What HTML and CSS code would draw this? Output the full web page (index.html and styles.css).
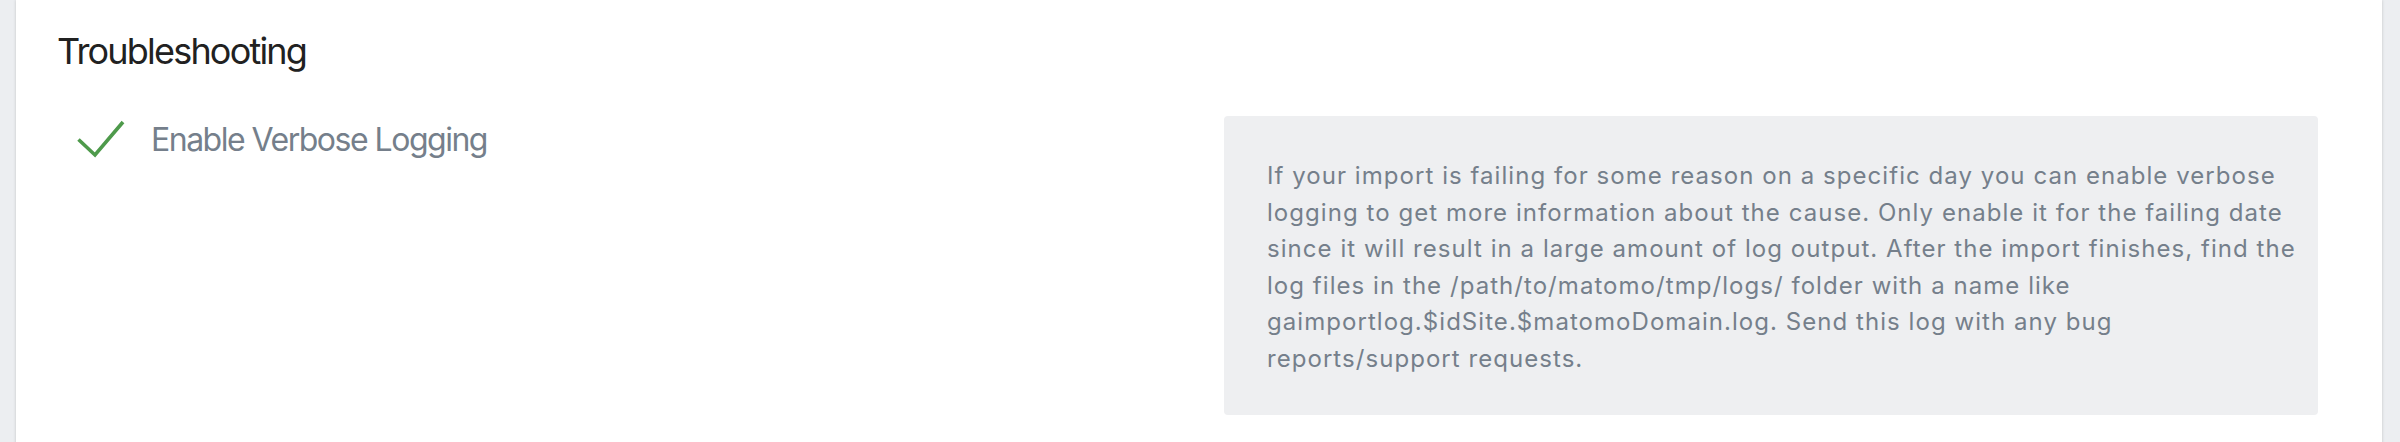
FILE: index.html
```html
<!DOCTYPE html>
<html lang="en">
<head>
<meta charset="utf-8">
<title>Troubleshooting</title>
<link rel="stylesheet" href="styles.css">
</head>
<body>
<div class="page">
  <section class="card">
    <h2 class="card-title">Troubleshooting</h2>
    <div class="row">
      <div class="col col-left">
        <label class="check">
          <svg class="check-icon" width="50" height="38" viewBox="0 0 50 38" aria-hidden="true">
            <path d="M2.5 19.5 L19 35 L47 2" fill="none" stroke="#4e9a4b" stroke-width="3.6" stroke-linecap="butt" stroke-linejoin="miter"/>
          </svg>
          <span class="check-label">Enable Verbose Logging</span>
        </label>
      </div>
      <div class="col col-right">
        <div class="help">
          If your import is failing for some reason on a specific day you can enable verbose logging to get more information about the cause. Only enable it for the failing date since it will result in a large amount of log output. After the import finishes, find the log files in the /path/to/matomo/tmp/logs/ folder with a name like gaimportlog.$idSite.$matomoDomain.log. Send this log with any bug reports/support requests.
        </div>
      </div>
    </div>
  </section>
</div>
</body>
</html>
```
FILE: styles.css
```css
html, body {
  margin: 0;
  padding: 0;
  height: 100%;
}
body {
  background: #eceef1;
  font-family: Inter, "Noto Sans", sans-serif;
}
.page {
  padding: 0 18px 0 16px;
  height: 100%;
}
.card {
  background: #ffffff;
  min-height: 100%;
  box-sizing: border-box;
  padding: 29px 64px 40px 41px;
  box-shadow: 0 0 3px rgba(0, 0, 0, 0.18);
}
.card-title {
  margin: 0;
  font-size: 36px;
  line-height: 44px;
  font-weight: 400;
  letter-spacing: -1.8px;
  color: #212121;
}
.row {
  display: flex;
  margin-top: 43px;
}
.col-left {
  width: 1167px;
  flex: none;
}
.col-right {
  flex: 1;
}
.check {
  display: flex;
  align-items: flex-start;
  margin-top: 4px;
}
.check-icon {
  flex: none;
  margin: 0 25px 0 19px;
}
.check-label {
  font-size: 32px;
  line-height: 40px;
  letter-spacing: -1.5px;
  color: #757f8b;
}
.help {
  background: #eeeff1;
  border-radius: 4px;
  padding: 42px 6px 38px 43px;
  font-size: 24px;
  line-height: 36.5px;
  letter-spacing: 1.05px;
  color: #757f8b;
}
```
